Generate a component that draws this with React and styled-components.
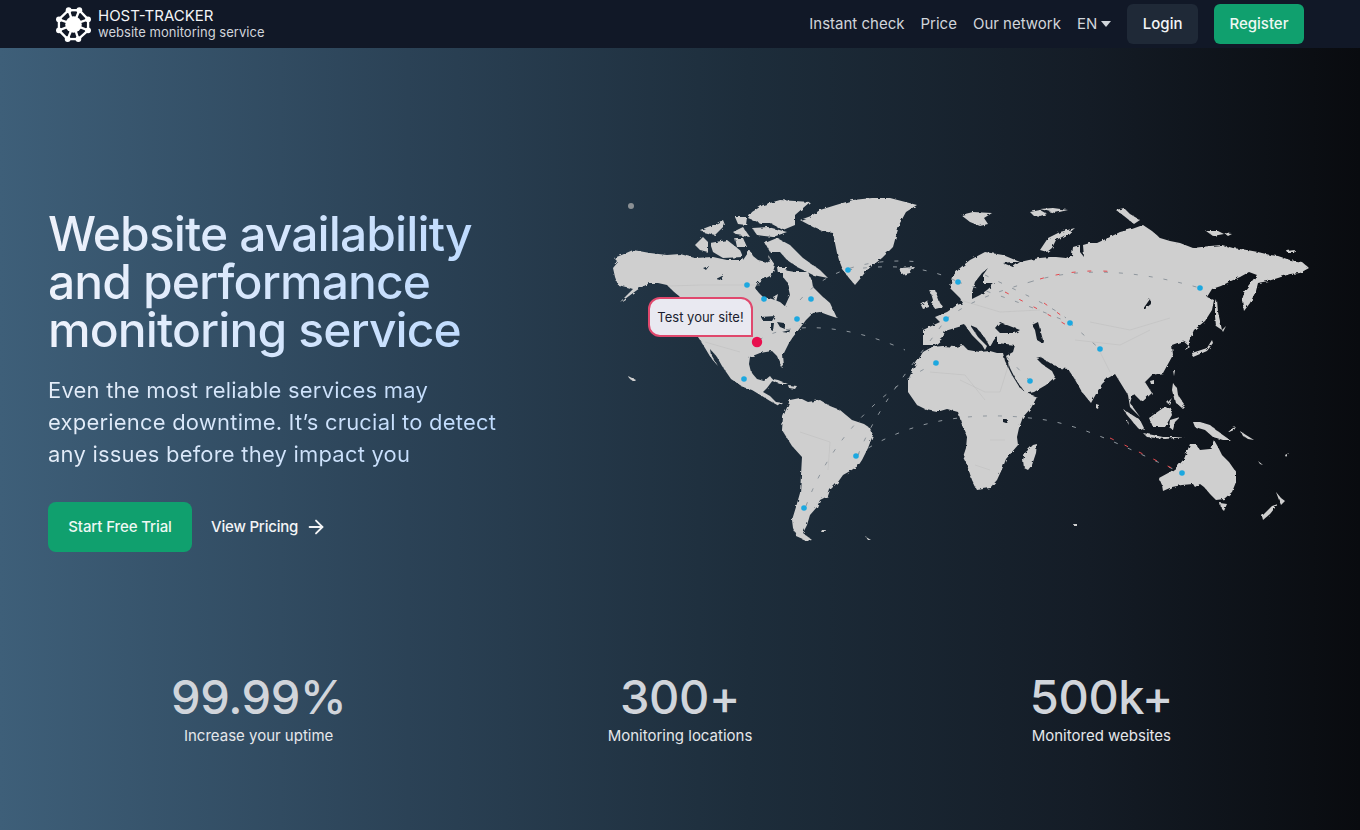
import React from "react";
import styled, { createGlobalStyle } from "styled-components";
import { ArrowRight } from "lucide-react";

const GlobalStyle = createGlobalStyle`
  html, body { margin: 0; padding: 0; }
  body { font-family: Inter, "Noto Sans", "Liberation Sans", sans-serif; background: #0a0c10; }
  a { text-decoration: none; color: inherit; }
`;

// page coordinates, the svg viewBox starts at 600,190
const land = [
  // north america
  "M613 268L618 262L614 258L624 254L633 250L650 253L667 255L680 254L695 258L713 257L727 260L743 260L750 250L753 256L758 260L770 263L768 255L775 265L772 275L764 279L758 282L755 288L759 293L763 297L772 299L780 302L785 306L790 295L787 282L783 277L783 270L795 272L808 272L812 281L813 287L822 296L830 303L837 318L828 315L820 312L813 313L806 320L800 328L793 337L789 343L787 347L783 355L784 366L782 368L777 356L772 351L760 353L750 357L749 364L751 372L757 379L764 381L770 376L773 380L767 388L763 392L770 396L776 402L783 403L779 406L770 401L762 396L752 390L743 387L731 379L722 366L717 357L711 350L712 356L718 366L711 358L705 348L700 340L694 331L687 316L680 297L672 290L667 285L658 283L650 283L640 288L633 293L625 299L620 302L627 295L633 289L626 287L618 285L615 277Z M703 268L709 266L706 270Z M716 279L724 275L720 280Z M761 317L775 316L772 321L763 321Z M771 323L774 323L773 331L771 330Z M777 322L784 323L785 329L780 327Z M782 332L790 330L789 333Z",
  // greenland
  "M800 220L811 216L820 210L836 205L853 200L872 198L890 198L917 205L906 212L900 223L896 236L893 247L882 258L867 270L860 279L855 285L849 278L843 270L839 260L837 253L835 243L833 233L822 231L813 227Z",
  // arctic islands
  "M752 212L763 205L780 200L810 202L795 215L795 225L783 230L770 223L760 223L748 218Z",
  "M735 217L747 217L746 225L738 224Z",
  "M700 230L713 225L723 220L725 225L715 235L703 232Z",
  "M733 232L743 227L750 237L737 235Z",
  "M752 228L768 227L787 232L773 237L757 235Z",
  "M765 243L777 238L790 245L803 258L820 270L828 278L813 275L797 267L787 260L780 252L770 252Z",
  "M710 243L727 240L740 250L743 257L723 258L713 252Z",
  "M695 245L703 237L708 242L708 252L700 250Z",
  "M735 238L743 238L747 247L737 247Z",
  "M777 267L787 267L786 273L778 273Z",
  "M773 297L778 294L776 302Z",
  // caribbean
  "M768 378L778 380L788 384L780 384L772 381Z",
  "M788 385L797 386L795 389L789 388Z",
  // south america
  "M790 400L800 398L808 402L820 400L830 406L840 410L852 420L864 424L870 428L873 435L868 448L862 460L858 466L850 471L843 475L838 482L830 490L828 496L820 500L817 507L810 515L807 525L803 533L812 540L806 541L797 537L793 528L792 520L796 507L800 493L801 475L802 457L792 446L782 430L783 417Z",
  "M822 530L826 530L825 532L821 532Z",
  // africa
  "M908 380L915 365L923 352L932 347L943 346L955 347L963 345L968 350L980 352L990 351L997 353L1003 353L1005 361L1012 375L1020 388L1027 393L1037 397L1031 408L1023 417L1019 428L1017 437L1018 445L1012 452L1006 459L1003 467L997 480L990 488L977 490L972 480L967 465L963 457L966 448L967 437L962 425L958 412L947 409L937 412L927 410L917 405L908 392Z M1003 419L1007 419L1006 423L1003 422Z",
  "M1033 445L1037 444L1036 453L1032 465L1028 470L1024 468L1023 460L1025 453Z",
  // eurasia, seas cut out
  "M923 330L923 345L935 345L943 338L945 331L955 328L965 325L972 335L982 345L985 350L987 346L978 337L970 325L977 328L985 338L990 347L994 340L997 336L997 343L1015 345L1013 352L1006 356L1010 368L1016 380L1022 388L1026 394L1034 392L1046 385L1055 377L1052 371L1043 365L1036 358L1040 357L1050 363L1059 368L1068 369L1074 378L1082 392L1091 403L1096 394L1102 384L1108 378L1115 374L1123 387L1128 395L1130 407L1140 417L1130 403L1133 393L1142 402L1152 393L1145 382L1152 375L1163 373L1173 355L1172 345L1180 342L1186 342L1182 340L1190 347L1185 350L1194 330L1205 321L1212 310L1214 300L1207 297L1212 289L1221 286L1231 281L1240 277L1249 272L1257 275L1252 281L1245 290L1242 300L1244 311L1250 303L1256 291L1258 283L1268 281L1278 278L1290 274L1300 273L1309 268L1302 262L1290 260L1278 256L1270 255L1258 252L1247 250L1233 248L1222 245L1210 246L1193 248L1180 243L1170 241L1160 238L1152 231L1143 225L1132 229L1120 232L1108 238L1097 243L1090 243L1083 245L1084 257L1080 252L1080 245L1073 247L1072 255L1066 258L1056 257L1050 257L1040 258L1029 260L1020 262L1013 267L1003 263L1012 262L1020 262L1003 255L985 252L970 260L960 268L952 277L950 288L960 298L963 303L957 305L947 312L935 317L940 322Z M988 268L982 273L975 282L972 292L972 299L980 295L987 290L995 283L983 283L983 275Z M995 328L1000 322L1007 325L1020 330L1015 333L1000 333Z M1032 325L1038 322L1043 340L1042 343L1037 340L1035 330Z M1143 309L1150 299L1151 304L1145 309Z",
  // uk, ireland, iceland, svalbard, novaya zemlya
  "M930 290L935 290L940 303L943 307L935 309L932 305L933 300Z",
  "M921 305L928 300L929 307L923 309Z",
  "M900 268L915 267L910 273L902 275Z",
  "M961 215L973 212L992 213L984 218L988 224L980 226L970 222Z",
  "M1030 212L1040 210L1047 214L1040 216L1033 215Z",
  "M1040 209L1053 208L1068 210L1055 213Z",
  "M1040 250L1048 238L1060 232L1075 228L1068 234L1056 240L1052 248L1047 252Z",
  "M1116 210L1124 208L1130 214L1140 220L1134 224L1124 216Z",
  "M1206 231L1218 231L1224 234L1213 236Z",
  "M1224 233L1232 234L1228 236Z",
  "M1287 251L1295 250L1294 253L1288 253Z",
  // sakhalin, japan, taiwan, hainan
  "M1215 305L1217 300L1218 312L1222 330L1216 326L1215 316Z",
  "M1222 330L1226 326L1223 332Z",
  "M1192 353L1207 348L1212 340L1213 343L1207 351L1193 357Z",
  "M1173 370L1175 370L1174 376Z",
  "M1150 381L1154 380L1154 384L1151 384Z",
  // south east asia
  "M1123 409L1140 420L1145 430L1138 428L1127 415Z",
  "M1143 433L1163 437L1185 437L1165 439L1147 437Z",
  "M1149 418L1163 408L1170 407L1172 415L1165 427L1153 427Z",
  "M1170 420L1180 417L1175 422L1173 430L1169 427Z",
  "M1173 383L1177 388L1178 395L1185 405L1182 408L1175 402L1172 390Z",
  "M1167 403L1172 398L1169 404Z",
  "M1193 422L1200 422L1210 425L1220 433L1230 440L1223 440L1213 437L1205 430L1195 427Z",
  "M1228 430L1236 427L1234 430L1229 432Z",
  "M1240 431L1246 435L1254 440L1248 439L1242 435Z",
  "M1096 404L1099 405L1098 409L1096 408Z",
  "M1126 420L1128 421L1129 425Z",
  "M1258 461L1263 465L1260 464Z",
  // australia, tasmania, nz
  "M1159 478L1170 472L1178 466L1184 459L1190 444L1196 444L1200 450L1210 449L1214 440L1218 447L1222 455L1229 462L1236 472L1236 482L1232 492L1224 499L1216 500L1210 494L1204 487L1200 484L1195 487L1193 484L1182 485L1172 487L1163 491L1162 485Z",
  "M1220 503L1227 504L1224 511L1221 508Z",
  "M1276 492L1281 498L1285 501L1281 505L1279 500Z",
  "M1278 504L1270 514L1263 520L1262 516L1272 506Z",
  "M1285 455L1289 453L1286 457Z",
  "M1073 524L1077 524L1077 526L1074 526Z",
  "M628 376L636 380L634 382L629 378Z",
  "M866 537L871 540L868 540Z",
];

const borders =
  "M668 286L700 285L760 285M705 342L740 352M1010 360L1000 392L985 392L960 380M930 372L965 375L985 400M990 440L1005 440M975 465L990 470M800 432L830 442L828 470M960 300L1000 312L1040 310M1075 340L1120 345L1150 330M1100 352L1110 372M1090 322L1130 330L1170 318";

const grayRoutes = [
  "M759 340C790 320 850 325 905 350",
  "M848 270C900 262 935 270 958 282",
  "M858 455C880 400 925 350 946 319",
  "M806 506C830 440 880 390 936 363",
  "M856 456C900 425 960 410 1030 418C1080 422 1130 450 1182 473",
  "M958 282C1000 295 1040 310 1070 323",
  "M1070 323L1100 349",
  "M1030 381L1005 355",
  "M946 319C965 305 985 295 1030 282",
  "M1030 282C1075 268 1130 268 1200 288",
  "M985 275C1015 290 1050 305 1066 318",
  "M800 300C830 265 880 258 920 262",
];

const redRoutes = [
  "M1040 279C1070 270 1100 270 1115 272",
  "M1005 292C1030 305 1050 315 1068 326",
  "M1044 303L1062 316",
  "M1110 438C1135 450 1155 460 1176 470",
];

const nodes = [
  [747, 285], [764, 299], [811, 299], [797, 319], [848, 270], [958, 282], [946, 319], [936, 363],
  [1030, 381], [1070, 323], [1100, 349], [1200, 288], [856, 456], [804, 508], [744, 379], [1182, 473],
];

const stats = [
  { value: "99.99%", label: "Increase your uptime" },
  { value: "300+", label: "Monitoring locations" },
  { value: "500k+", label: "Monitored websites" },
];

const logoNodes = [
  [68, 9.3], [79, 9.3], [88, 18.7], [88, 30], [78, 39], [67, 39], [58, 30], [58, 18.7],
];

const Logo = () => (
  <LogoIcon viewBox="55 6 36 36">
    {logoNodes.map(([x, y], i) => {
      const [nx, ny] = logoNodes[(i + 1) % logoNodes.length];
      return (
        <g key={i}>
          <line x1={x} y1={y} x2={nx} y2={ny} stroke="#fff" strokeWidth="2.4" />
          <line x1={x} y1={y} x2="73" y2="24" stroke="#fff" strokeWidth="2.4" />
          <circle cx={x} cy={y} r="3" fill="#fff" />
        </g>
      );
    })}
    <circle cx="73" cy="24" r="8.5" fill="#fff" />
  </LogoIcon>
);

const WorldMap = () => (
  <MapBox>
    <svg viewBox="600 190 720 360" width="720" height="360">
      <defs>
        <filter id="coast" x="0" y="0" width="100%" height="100%" filterUnits="objectBoundingBox">
          <feTurbulence type="fractalNoise" baseFrequency="0.22" numOctaves="2" seed="4" />
          <feDisplacementMap in="SourceGraphic" scale="3.5" />
        </filter>
      </defs>
      <g filter="url(#coast)">
        {land.map((d, i) => (
          <path key={i} d={d} fill="#cfcfcf" fillRule="evenodd" />
        ))}
      </g>
      <path d={borders} fill="none" stroke="#bdbdbd" strokeWidth="0.5" />
      {grayRoutes.map((d, i) => (
        <path key={i} d={d} fill="none" stroke="#8f979e" strokeWidth="1" strokeDasharray="4 11" />
      ))}
      {redRoutes.map((d, i) => (
        <path key={i} d={d} fill="none" stroke="#e5484d" strokeWidth="1" strokeDasharray="4 12" />
      ))}
      <circle cx="631" cy="206" r="3" fill="#8b9094" />
      {nodes.map(([x, y], i) => (
        <circle key={i} cx={x} cy={y} r="2.8" fill="#1ca8e0" />
      ))}
      <circle cx="757" cy="342" r="5.2" fill="#e80f4e" />
    </svg>
    <Callout>Test your site!</Callout>
  </MapBox>
);

export default function App() {
  return (
    <Page>
      <GlobalStyle />
      <Nav>
        <Brand href="#">
          <Logo />
          <BrandText>
            <BrandName>HOST-TRACKER</BrandName>
            <BrandTag>website monitoring service</BrandTag>
          </BrandText>
        </Brand>
        <NavLinks>
          <NavLink href="#">Instant check</NavLink>
          <NavLink href="#">Price</NavLink>
          <NavLink href="#">Our network</NavLink>
          <NavLink href="#">
            EN<Caret />
          </NavLink>
          <NavButton href="#">Login</NavButton>
          <NavButton href="#" $primary>
            Register
          </NavButton>
        </NavLinks>
      </Nav>
      <Hero>
        <Intro>
          <Title>
            Website availability
            <br />
            and performance
            <br />
            monitoring service
          </Title>
          <Lead>
            Even the most reliable services may
            <br />
            experience downtime. It’s crucial to detect
            <br />
            any issues before they impact you
          </Lead>
          <Actions>
            <TrialButton href="#">Start Free Trial</TrialButton>
            <PricingLink href="#">
              View Pricing
              <ArrowRight size={22} strokeWidth={2} />
            </PricingLink>
          </Actions>
        </Intro>
        <WorldMap />
      </Hero>
      <Stats>
        {stats.map((s) => (
          <Stat key={s.label}>
            <StatValue>{s.value}</StatValue>
            <StatLabel>{s.label}</StatLabel>
          </Stat>
        ))}
      </Stats>
    </Page>
  );
}

const Page = styled.div`
  height: 830px;
  overflow: hidden;
  background: linear-gradient(90deg, #3e5f79 0%, #2b4256 30%, #1d2d3b 55%, #141c26 80%, #090b0f 100%);
`;

const Nav = styled.nav`
  height: 48px;
  padding: 0 56px;
  display: flex;
  align-items: center;
  justify-content: space-between;
  background: #111827;
  color: #d1d5db;
`;

const Brand = styled.a`
  display: flex;
  align-items: center;
  gap: 7px;
`;

const LogoIcon = styled.svg`
  width: 35px;
  height: 35px;
`;

const BrandText = styled.div`
  display: flex;
  flex-direction: column;
`;

const BrandName = styled.span`
  font-size: 15px;
  line-height: 16px;
  color: #f3f4f6;
`;

const BrandTag = styled.span`
  font-size: 13px;
  line-height: 16px;
  letter-spacing: 0.03px;
  color: #d1d5db;
`;

const NavLinks = styled.div`
  display: flex;
  align-items: center;
  gap: 16px;
`;

const NavLink = styled.a`
  display: flex;
  align-items: center;
  gap: 4px;
  padding-bottom: 2px;
  font-size: 15px;
  color: #d1d5db;
`;

const Caret = styled.span`
  width: 0;
  height: 0;
  margin-top: 2px;
  border-left: 5px solid transparent;
  border-right: 5px solid transparent;
  border-top: 6px solid #d1d5db;
`;

const NavButton = styled.a`
  height: 40px;
  padding: 0 15.5px 2px;
  box-sizing: border-box;
  display: flex;
  align-items: center;
  border-radius: 6px;
  font-size: 15px;
  font-weight: 500;
  color: ${(p) => (p.$primary ? "#eef8f3" : "#f3f4f6")};
  background: ${(p) => (p.$primary ? "#10a06e" : "#1f2937")};
`;

const Hero = styled.section`
  height: 621px;
  padding-left: 48px;
  display: flex;
`;

const Intro = styled.div`
  width: 552px;
  padding-top: 162px;
`;

const Title = styled.h1`
  width: fit-content;
  margin: 0;
  font-size: 48px;
  line-height: 48px;
  font-weight: 500;
  letter-spacing: -0.9px;
  padding-bottom: 8px;
  color: transparent;
  background: linear-gradient(90deg, #eef2fb, #bfdbfe);
  -webkit-background-clip: text;
  background-clip: text;
`;

const Lead = styled.p`
  width: fit-content;
  margin: 12px 0 0;
  font-size: 22px;
  line-height: 32px;
  letter-spacing: 0.2px;
  color: transparent;
  background: linear-gradient(90deg, #e5edf8, #bfdbfe);
  -webkit-background-clip: text;
  background-clip: text;
`;

const Actions = styled.div`
  margin-top: 32px;
  display: flex;
  align-items: center;
  gap: 19px;
`;

const TrialButton = styled.a`
  width: 144px;
  height: 50px;
  padding-bottom: 1px;
  box-sizing: border-box;
  display: flex;
  align-items: center;
  justify-content: center;
  border-radius: 8px;
  font-size: 15px;
  font-weight: 500;
  letter-spacing: -0.1px;
  color: #eef8f3;
  background: #10a06e;
`;

const PricingLink = styled.a`
  display: flex;
  align-items: center;
  gap: 7px;
  padding-bottom: 1px;
  font-size: 15px;
  font-weight: 500;
  letter-spacing: -0.2px;
  color: #f3f4f6;
`;

const MapBox = styled.div`
  position: relative;
  width: 720px;
  height: 360px;
  margin-top: 142px;
  svg {
    display: block;
  }
`;

const Callout = styled.div`
  position: absolute;
  left: 48px;
  top: 107px;
  width: 105px;
  height: 40px;
  box-sizing: border-box;
  display: flex;
  align-items: center;
  justify-content: center;
  border: 2px solid #e0486d;
  border-radius: 12px 12px 0 12px;
  font-size: 13px;
  color: #1a1d2e;
  background: #e9e9f1;
`;

const Stats = styled.section`
  padding: 0 48px;
  display: grid;
  grid-template-columns: repeat(3, 1fr);
`;

const Stat = styled.div`
  display: flex;
  flex-direction: column;
  align-items: center;
`;

const StatValue = styled.div`
  font-size: 47px;
  line-height: 56px;
  font-weight: 500;
  letter-spacing: -0.4px;
  color: #d1d5db;
`;

const StatLabel = styled.div`
  margin-top: 1px;
  font-size: 15px;
  line-height: 20px;
  color: #e5e7eb;
`;
